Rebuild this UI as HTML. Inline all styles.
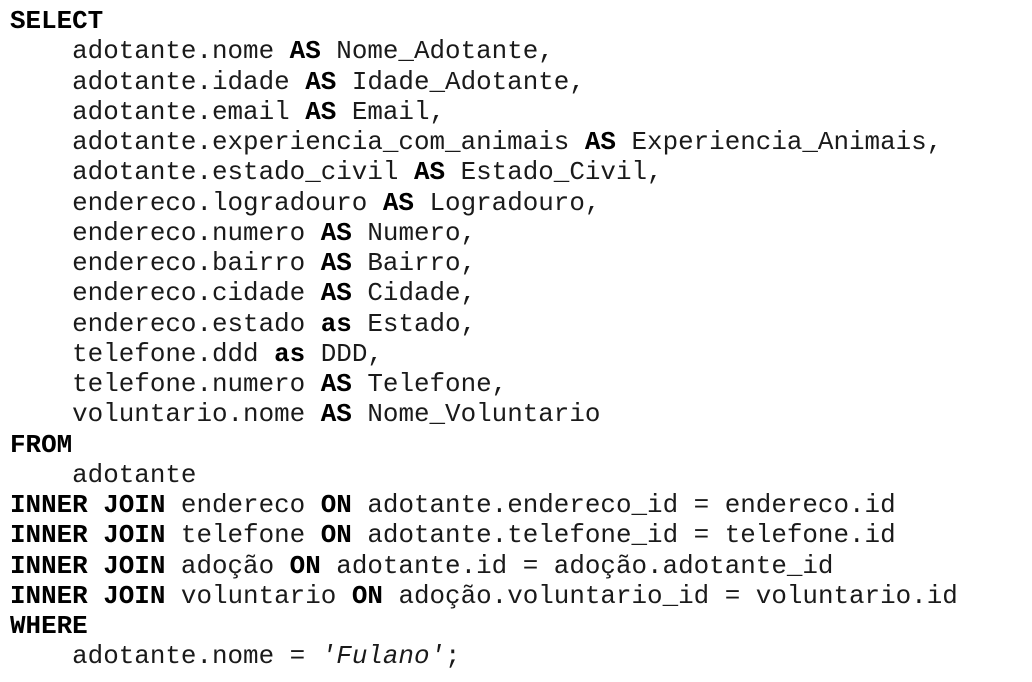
<!DOCTYPE html>
<html><head><meta charset="utf-8"><style>
html,body{margin:0;padding:0;background:#fff;width:1032px;height:682px;overflow:hidden}
.c{position:absolute;left:10px;top:6px;font-family:"Liberation Mono","Courier New",monospace;font-size:25.9px;color:#1a1a1a}
.c div{height:30.25px;line-height:30.25px;white-space:pre}
b{font-weight:bold;color:#000}
i{font-style:italic}
</style></head><body><div class="c">
<div><b>SELECT</b></div>
<div>    adotante.nome <b>AS</b> Nome_Adotante,</div>
<div>    adotante.idade <b>AS</b> Idade_Adotante,</div>
<div>    adotante.email <b>AS</b> Email,</div>
<div>    adotante.experiencia_com_animais <b>AS</b> Experiencia_Animais,</div>
<div>    adotante.estado_civil <b>AS</b> Estado_Civil,</div>
<div>    endereco.logradouro <b>AS</b> Logradouro,</div>
<div>    endereco.numero <b>AS</b> Numero,</div>
<div>    endereco.bairro <b>AS</b> Bairro,</div>
<div>    endereco.cidade <b>AS</b> Cidade,</div>
<div>    endereco.estado <b>as</b> Estado,</div>
<div>    telefone.ddd <b>as</b> DDD,</div>
<div>    telefone.numero <b>AS</b> Telefone,</div>
<div>    voluntario.nome <b>AS</b> Nome_Voluntario</div>
<div><b>FROM</b></div>
<div>    adotante</div>
<div><b>INNER JOIN</b> endereco <b>ON</b> adotante.endereco_id = endereco.id</div>
<div><b>INNER JOIN</b> telefone <b>ON</b> adotante.telefone_id = telefone.id</div>
<div><b>INNER JOIN</b> adoção <b>ON</b> adotante.id = adoção.adotante_id</div>
<div><b>INNER JOIN</b> voluntario <b>ON</b> adoção.voluntario_id = voluntario.id</div>
<div><b>WHERE</b></div>
<div>    adotante.nome = <i>'Fulano'</i>;</div>
</div></body></html>
